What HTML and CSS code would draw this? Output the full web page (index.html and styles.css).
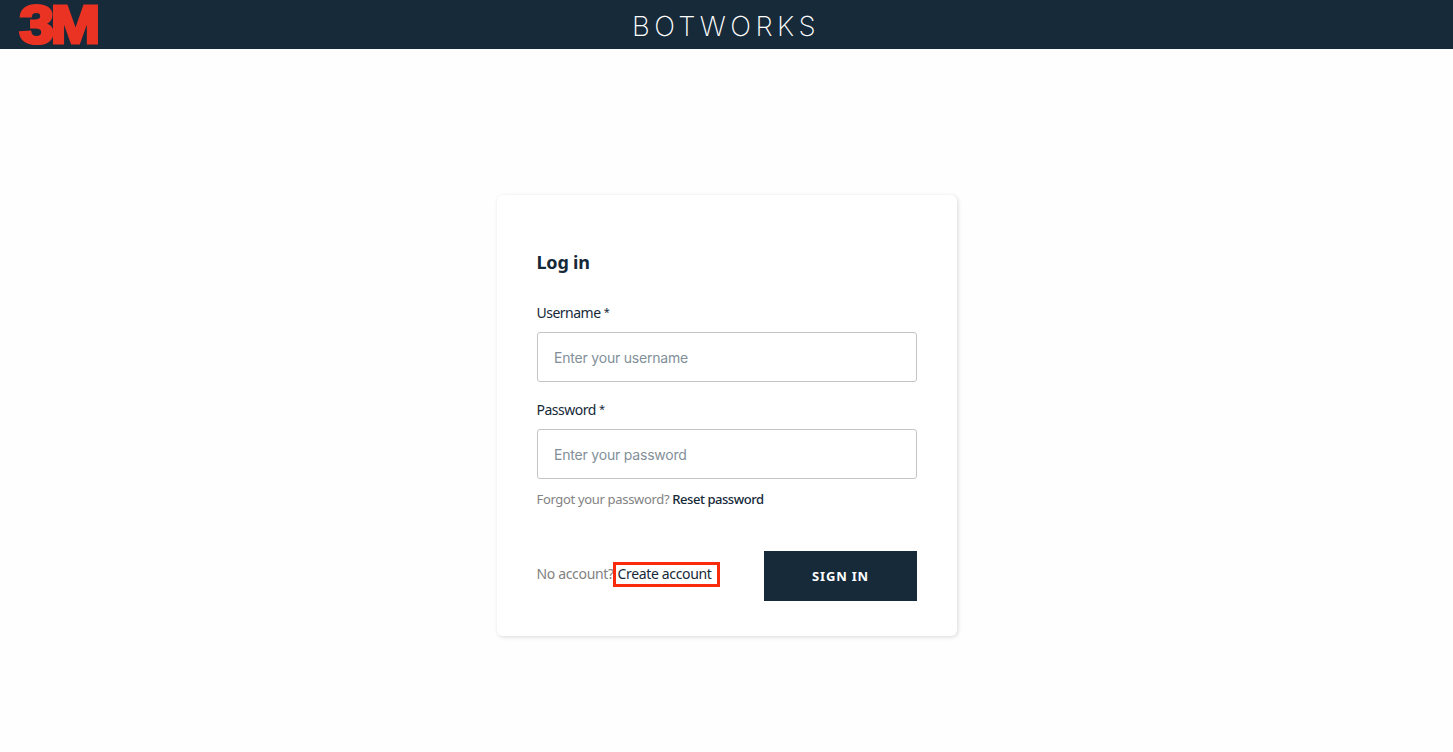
FILE: index.html
```html
<!DOCTYPE html>
<html lang="en">
<head>
<meta charset="utf-8">
<title>Botworks</title>
<link rel="stylesheet" href="styles.css">
</head>
<body>
<header class="topbar">
  <svg class="logo" viewBox="0 0 80 42" role="img" aria-label="3M">
    <text class="logo-text" x="0.4" y="39.4" textLength="34.5" lengthAdjust="spacingAndGlyphs">3</text>
    <text class="logo-text" x="31.8" y="39.4" textLength="49.4" lengthAdjust="spacingAndGlyphs">M</text>
  </svg>
  <div class="brand">BOTWORKS</div>
</header>
<main class="page">
  <form class="card">
    <h1 class="title">Log in</h1>
    <label class="label" for="user">Username <span class="star">*</span></label>
    <input class="field" id="user" type="text" placeholder="Enter your username">
    <label class="label" for="pass">Password <span class="star">*</span></label>
    <input class="field" id="pass" type="password" placeholder="Enter your password">
    <div class="hint">Forgot your password? <a class="link">Reset password</a></div>
    <div class="footer">
      <div class="signup"><span class="ask">No account?</span><a class="link create">Create account</a></div>
      <button class="submit" type="button">SIGN IN</button>
    </div>
  </form>
</main>
</body>
</html>
```
FILE: styles.css
```css
* { box-sizing: border-box; }
body {
  margin: 0;
  height: 752px;
  overflow: hidden;
  background: #fefefe;
  color: #152939;
  font-family: "Noto Sans", sans-serif;
}
.topbar {
  display: grid;
  grid-template-columns: 1fr auto 1fr;
  height: 49px;
  padding: 4px 19px 0;
  background: #172a39;
}
.logo { width: 80px; height: 42px; overflow: visible; }
.logo-text {
  font: 700 54px "Liberation Sans", Arial, sans-serif;
  fill: #ea3323;
  stroke: #ea3323;
  stroke-width: 3.2px;
}
.brand {
  color: #fff;
  font: 200 27.5px/44px Inter, sans-serif;
  letter-spacing: 4.4px;
  margin-right: 1px;
}
.page { display: flex; justify-content: center; padding-top: 146px; }
.card {
  width: 460px;
  height: 441px;
  margin-left: 1px;
  padding: 35px 40px;
  border-radius: 6px;
  background: #fff;
  box-shadow: 1px 1px 4px 0 rgba(0, 0, 0, 0.15);
}
.title {
  margin: 19px 0 26px -0.5px;
  font-size: 18px;
  line-height: 27px;
  font-weight: 700;
  letter-spacing: -0.2px;
}
.label {
  display: block;
  height: 30px;
  margin-left: -0.5px;
  font-size: 14px;
  line-height: 22px;
  letter-spacing: -0.5px;
}
.star { font-size: 11px; line-height: 1; vertical-align: 2px; }
.field {
  display: block;
  width: 100%;
  height: 50px;
  margin-bottom: 17px;
  padding: 0 16px;
  border: 1px solid #c4c4c4;
  border-radius: 3px;
  background: #fff;
  font: 400 14px Inter, sans-serif;
  letter-spacing: -0.2px;
}
.field::placeholder { color: #828f99; opacity: 1; }
.hint {
  margin: -7px 0 0 -0.5px;
  height: 61px;
  font-size: 13px;
  line-height: 20px;
  letter-spacing: -0.33px;
  color: #828282;
}
.link { color: #152939; }
.hint .link { font-weight: 500; letter-spacing: -0.45px; }
.footer { display: flex; justify-content: space-between; padding-top: 1px; }
.signup {
  display: flex;
  height: 25px;
  margin: 10.5px 0 0 -0.5px;
  font-size: 14px;
  line-height: 24px;
  letter-spacing: -0.34px;
}
.ask { width: 76px; color: #828282; white-space: nowrap; }
.create {
  height: 25px;
  width: 107px;
  padding-left: 2px;
  border: 3px solid #fa2a0c;
  line-height: 18px;
  white-space: nowrap;
}
.submit {
  width: 153px;
  height: 50px;
  padding: 0;
  border: 0;
  background: #172a39;
  color: #fff;
  font: 700 13px "Noto Sans", sans-serif;
  letter-spacing: 0.8px;
}
```
